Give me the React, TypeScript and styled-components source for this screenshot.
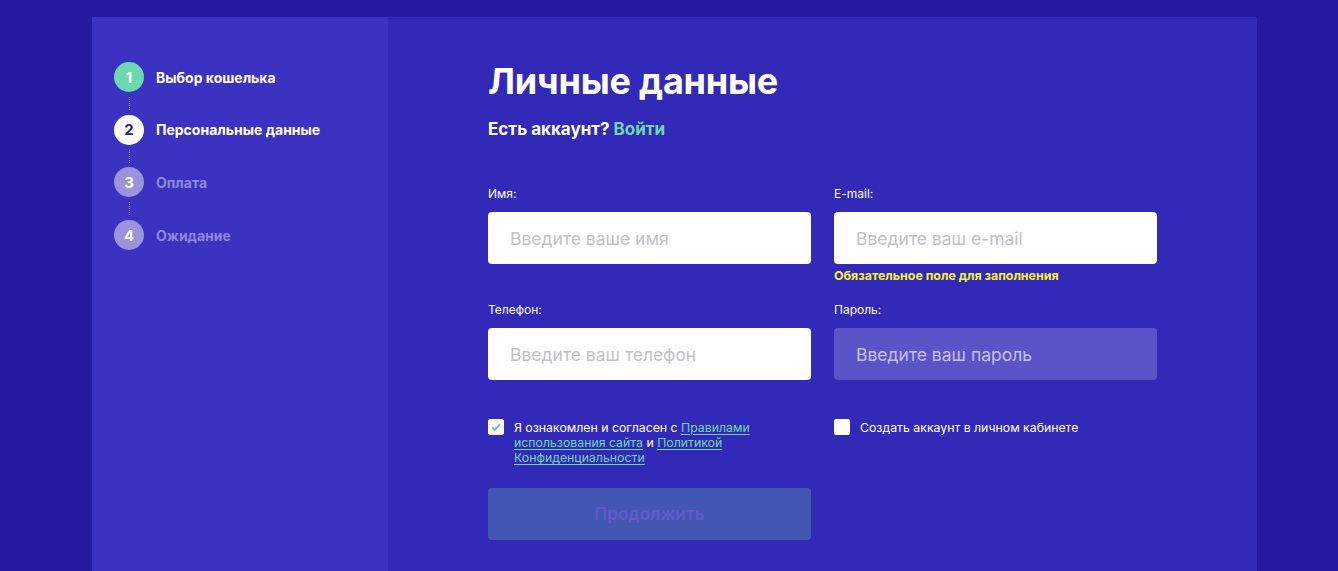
import styled, { createGlobalStyle } from 'styled-components';

const GlobalStyle = createGlobalStyle`
  html, body {
    margin: 0;
    padding: 0;
    background: #2419a0;
    font-family: Inter, "Noto Sans", sans-serif;
  }
  * { box-sizing: border-box; }
`;

const Page = styled.div`
  min-height: 571px;
  padding: 17px 81px 0 92px;
  overflow: hidden;
`;

const Card = styled.div`
  display: grid;
  grid-template-columns: 296px 1fr;
  min-height: 554px;
  background: #3329b9;
`;

const Sidebar = styled.aside`
  background: #3c32c1;
  padding: 45px 0 0 22px;
`;

const Steps = styled.ol`
  list-style: none;
  margin: 0;
  padding: 0;
  display: flex;
  flex-direction: column;
  gap: 22.7px;
`;

const Step = styled.li<{ $state: 'done' | 'active' | 'todo'; $last?: boolean }>`
  position: relative;
  display: flex;
  align-items: center;
  gap: 12px;
  height: 30px;
  font-size: 14px;
  font-weight: 700;
  color: ${p => (p.$state === 'todo' ? '#8f89d8' : '#ffffff')};

  &::after {
    content: '';
    display: ${p => (p.$last ? 'none' : 'block')};
    position: absolute;
    left: 15px;
    top: 35px;
    height: 13px;
    border-left: 1px dotted rgba(255, 255, 255, 0.45);
  }
`;

const Circle = styled.span<{ $state: 'done' | 'active' | 'todo' }>`
  width: 30px;
  height: 30px;
  border-radius: 50%;
  display: flex;
  align-items: center;
  justify-content: center;
  font-size: 15px;
  font-weight: 700;
  background: ${p =>
    p.$state === 'done' ? '#6bd8b0' : p.$state === 'active' ? '#ffffff' : '#9994dc'};
  color: ${p => (p.$state === 'active' ? '#2a1f9e' : '#ffffff')};
`;

const Main = styled.main`
  padding: 42px 0 0 100px;
  color: #ffffff;
`;

const Title = styled.h1`
  margin: 0;
  font-size: 36px;
  line-height: 44px;
  font-weight: 700;
  letter-spacing: -0.2px;
`;

const Account = styled.p`
  margin: 16px 0 0;
  font-size: 17px;
  font-weight: 700;
  line-height: 20px;

  a {
    color: #6bd8b0;
    text-decoration: none;
  }
`;

const Fields = styled.div`
  display: grid;
  grid-template-columns: 323px 323px;
  column-gap: 23px;
  margin-top: 47px;
`;

const Field = styled.div`
  display: flex;
  flex-direction: column;
  height: 116px;
`;

const Label = styled.label`
  font-size: 12px;
  line-height: 16px;
  margin-bottom: 10px;
  color: #ffffff;
`;

const Input = styled.input<{ $disabled?: boolean }>`
  height: 52px;
  border: none;
  border-radius: 4px;
  padding: 0 22px;
  font-family: inherit;
  font-size: 17.5px;
  outline: none;
  background: ${p => (p.$disabled ? '#5b53c8' : '#ffffff')};

  &::placeholder {
    color: ${p => (p.$disabled ? '#c5c1ec' : '#c2c2c8')};
  }
`;

const Error = styled.span`
  margin-top: 5px;
  font-size: 12.4px;
  line-height: 14px;
  font-weight: 700;
  color: #f6f23c;
`;

const Agreements = styled.div`
  display: grid;
  grid-template-columns: 323px 323px;
  column-gap: 23px;
  margin-top: 2px;
`;

const Check = styled.label`
  display: flex;
  align-items: flex-start;
  gap: 10px;
  font-size: 12.3px;
  line-height: 15px;
  color: #ffffff;

  a {
    color: #6bd8b0;
    text-decoration: underline;
    text-underline-offset: 2px;
  }
`;

const Box = styled.span`
  flex: none;
  width: 16px;
  height: 16px;
  border-radius: 2px;
  background: #ffffff;
  display: flex;
  align-items: center;
  justify-content: center;
  margin-top: -1px;
`;

const Submit = styled.button`
  display: block;
  width: 323px;
  height: 52px;
  margin-top: 23px;
  border: none;
  border-radius: 4px;
  background: #4257b1;
  color: #6358cc;
  font-family: inherit;
  font-size: 17px;
  font-weight: 700;
`;

type StepState = 'done' | 'active' | 'todo';

const steps: { n: number; title: string; state: StepState }[] = [
  { n: 1, title: 'Выбор кошелька', state: 'done' },
  { n: 2, title: 'Персональные данные', state: 'active' },
  { n: 3, title: 'Оплата', state: 'todo' },
  { n: 4, title: 'Ожидание', state: 'todo' },
];

const App = () => (
  <>
    <GlobalStyle />
    <Page>
      <Card>
        <Sidebar>
          <Steps>
            {steps.map((s, i) => (
              <Step key={s.n} $state={s.state} $last={i === steps.length - 1}>
                <Circle $state={s.state}>{s.n}</Circle>
                {s.title}
              </Step>
            ))}
          </Steps>
        </Sidebar>
        <Main>
          <Title>Личные данные</Title>
          <Account>
            Есть аккаунт? <a href="#">Войти</a>
          </Account>
          <Fields>
            <Field>
              <Label>Имя:</Label>
              <Input placeholder="Введите ваше имя" />
            </Field>
            <Field>
              <Label>E-mail:</Label>
              <Input placeholder="Введите ваш e-mail" />
              <Error>Обязательное поле для заполнения</Error>
            </Field>
            <Field>
              <Label>Телефон:</Label>
              <Input placeholder="Введите ваш телефон" />
            </Field>
            <Field>
              <Label>Пароль:</Label>
              <Input $disabled placeholder="Введите ваш пароль" />
            </Field>
          </Fields>
          <Agreements>
            <Check>
              <Box>
                <svg width="10" height="8" viewBox="0 0 10 8">
                  <path d="M1 4.2 L3.8 7 L9 1.2" fill="none" stroke="#5cc8a0" strokeWidth="1.8" />
                </svg>
              </Box>
              <span>
                Я ознакомлен и согласен с <a href="#">Правилами использования сайта</a> и{' '}
                <a href="#">Политикой Конфиденциальности</a>
              </span>
            </Check>
            <Check>
              <Box />
              <span>Создать аккаунт в личном кабинете</span>
            </Check>
          </Agreements>
          <Submit>Продолжить</Submit>
        </Main>
      </Card>
    </Page>
  </>
);

export default App;
